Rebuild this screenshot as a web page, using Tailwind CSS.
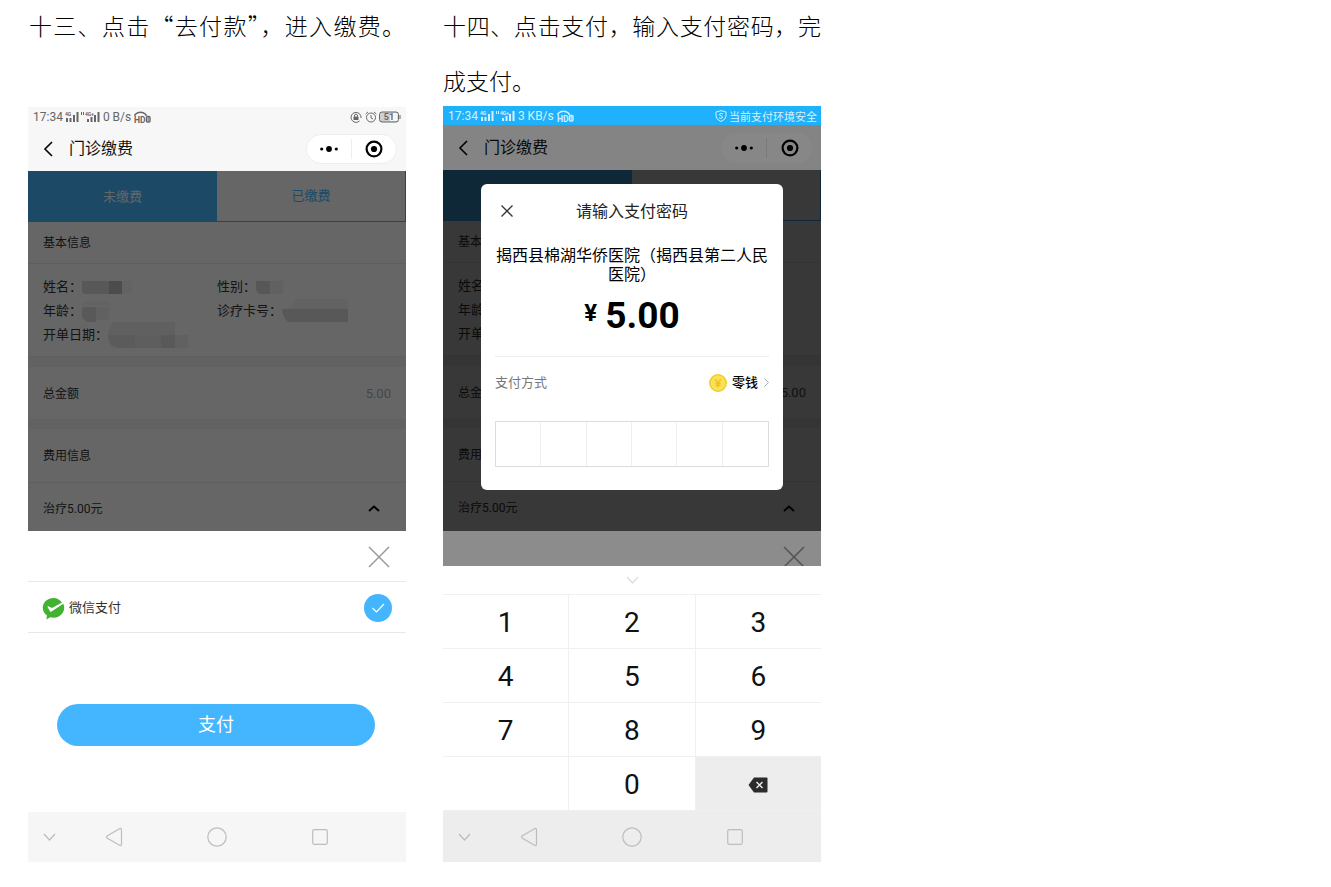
<!DOCTYPE html>
<html lang="zh-CN">
<head>
<meta charset="utf-8">
<meta name="viewport" content="width=device-width, initial-scale=1">
<title>门诊缴费指引</title>
<script src="https://cdn.jsdelivr.net/npm/@tailwindcss/browser@4"></script>
</head>
<body class="bg-white font-['Roboto','Noto_Sans_CJK_SC',sans-serif] text-[#333]">

<svg class="hidden" aria-hidden="true">
  <symbol id="signal" viewBox="0 0 35 12">
    <g fill="currentColor">
      <text x="0" y="5" font-size="5" font-weight="700">4G</text>
      <rect x="1" y="7" width="2" height="4"/><rect x="4.500" y="7" width="2" height="4"/><rect x="8" y="4" width="2" height="7"/><rect x="11.500" y="1" width="2" height="10"/>
      <rect x="16" y="1" width="1" height="3"/><rect x="18" y="1" width="1" height="3"/>
      <text x="20" y="5" font-size="5" font-weight="700">4G+</text>
      <rect x="22" y="8" width="2" height="3"/><rect x="25.500" y="6" width="2" height="5"/><rect x="29" y="4" width="2" height="7"/><rect x="32.500" y="1" width="2" height="10"/>
    </g>
  </symbol>
  <symbol id="hd" viewBox="0 0 17 12">
    <path d="M1 5V3.500Q6.500-1 12 3.500V5" fill="none" stroke="currentColor" stroke-width="1.500"/>
    <text x="0" y="11.500" font-size="8.500" font-weight="700" fill="currentColor">HD</text>
    <rect x="12.500" y="5.500" width="3.500" height="5.500" rx="1" fill="none" stroke="currentColor" stroke-width="1.400"/><path d="M14.200 6v4" stroke="currentColor"/>
  </symbol>
  <symbol id="back" viewBox="0 0 10 16"><path d="M9 1 2 8l7 7" fill="none" stroke="currentColor" stroke-width="1.600"/></symbol>
  <symbol id="dots" viewBox="0 0 18 8"><g fill="currentColor"><circle cx="1.700" cy="4" r="1.600"/><circle cx="9" cy="4" r="2.900"/><circle cx="16.300" cy="4" r="1.600"/></g></symbol>
  <symbol id="target" viewBox="0 0 18 18"><circle cx="9" cy="9" r="7.400" fill="none" stroke="currentColor" stroke-width="2.200"/><circle cx="9" cy="9" r="3.100" fill="currentColor"/></symbol>
  <symbol id="cross" viewBox="0 0 22 22"><path d="M1 1l20 20M21 1 1 21" fill="none" stroke="currentColor" stroke-width="1.500"/></symbol>
  <symbol id="caret" viewBox="0 0 12 7"><path d="M1 6l5-4.500L11 6" fill="none" stroke="currentColor" stroke-width="1.900"/></symbol>
  <symbol id="down" viewBox="0 0 13 8"><path d="M1 1l5.500 6L12 1" fill="none" stroke="currentColor" stroke-width="1.300"/></symbol>
  <symbol id="tri" viewBox="0 0 18 20"><path d="M15 1.500 2 9q-1 1 0 2l13 7.500q1.500.3 1.500-1.500V3q0-1.800-1.500-1.500z" fill="none" stroke="currentColor" stroke-width="1.200"/></symbol>
  <symbol id="circ" viewBox="0 0 20 20"><circle cx="10" cy="10" r="9.200" fill="none" stroke="currentColor" stroke-width="1.200"/></symbol>
  <symbol id="sq" viewBox="0 0 16 16"><rect x=".7" y=".7" width="14.600" height="14.600" rx="1.500" fill="none" stroke="currentColor" stroke-width="1.200"/></symbol>
  <symbol id="mask-name" viewBox="0 0 52 24"><path d="M0 6h27v13H3q-3 0-3-3z" fill="#dcdcdc"/><path d="M27 6h13v13H27z" fill="#bebebe"/><path d="M40 6h10v13H40z" fill="#f7f7f7"/></symbol>
  <symbol id="mask-age" viewBox="0 0 28 24"><path d="M3 2h25v5H0q0-4 3-5z" fill="#f8f8f8"/><path d="M0 8h14v15H6q-6-2-6-7z" fill="#dedede"/><path d="M14 8h13v13H14z" fill="#f3f3f3"/></symbol>
  <symbol id="mask-date" viewBox="0 0 80 26"><path d="M7 0h60v13H0Q1 2 7 0z" fill="#f0f0f0"/><path d="M0 13h27v13H10Q0 25 0 13z" fill="#e4e4e4"/><path d="M27 13h26v13H27z" fill="#eaeaea"/><path d="M53 13h14v13H53z" fill="#dedede"/><path d="M67 13h13v13H67z" fill="#f3f3f3"/></symbol>
  <symbol id="mask-sex" viewBox="0 0 28 24"><path d="M0 6h14v13H4q-4-1-4-6z" fill="#dadada"/><path d="M14 6h13v13H14z" fill="#f2f2f2"/></symbol>
  <symbol id="mask-card" viewBox="0 0 66 24"><path d="M13 0h53v10H0q12 0 13-10z" fill="#f5f5f5"/><path d="M0 10h66v13H8Q1 22 0 10z" fill="#dcdcdc"/></symbol>
</svg>

<main class="ml-7 grid w-full max-w-[793px] grid-cols-2 gap-[37px]">

  <section>
    <h2 class="-mt-[2px] h-[109px] px-px font-['Noto_Sans_CJK_SC',sans-serif] text-justify text-[23px] leading-[55px] font-light text-black [text-align-last:justify]">十三、点击“去付款”，进入缴费。</h2>

    <div class="flex flex-col">
      <div class="flex h-[19px] items-center bg-[#f7f7f7] pr-[5px] pl-[5px] text-xs text-[#666]">
        <span>17:34</span>
        <svg class="ml-[2px] h-3 w-[35px]"><use href="#signal"/></svg>
        <span class="ml-[3px]">0 B/s</span>
        <svg class="ml-[3px] h-3 w-[17px]"><use href="#hd"/></svg>
        <svg class="ml-auto size-3" viewBox="0 0 12 12"><path d="M9.500 10A5 5 0 1 1 11 7" fill="none" stroke="currentColor"/><rect x="3.500" y="5.500" width="5" height="3.500" fill="currentColor"/><path d="M4.500 5.500V4q1.500-2 3 0v1.500" fill="none" stroke="currentColor"/></svg>
        <svg class="ml-[3px] size-3" viewBox="0 0 12 12" fill="none" stroke="currentColor"><circle cx="6" cy="6.500" r="4.500"/><path d="M6 4v3l2 1M.7 3 3 .9M11.300 3 9 .9"/></svg>
        <svg class="ml-[2px] h-3 w-[22px]" viewBox="0 0 22 12"><rect x=".5" y="1" width="19" height="10" rx="2.500" fill="#d0d0d0" stroke="currentColor"/><path d="M11 2h6.500q1 0 1 1v6q0 1-1 1H11z" fill="#f7f7f7"/><path d="M21 4v4" stroke="currentColor"/><text x="10" y="9.200" font-size="9" font-weight="700" text-anchor="middle" fill="currentColor">51</text></svg>
      </div>

      <header class="flex h-[45px] items-center bg-[#f7f7f7] pt-px pr-[9px] pl-[15px] text-black">
        <button type="button" aria-label="返回"><svg class="h-4 w-[10px]"><use href="#back"/></svg></button>
        <h3 class="ml-4 text-base text-[#111]">门诊缴费</h3>
        <div class="ml-auto flex h-[30px] w-[91px] items-center rounded-full border border-[#eee] bg-white">
          <button type="button" aria-label="更多" class="flex flex-1 justify-center"><svg class="h-2 w-[18px]"><use href="#dots"/></svg></button>
          <span class="h-5 w-px bg-[#eee]"></span>
          <button type="button" aria-label="关闭小程序" class="flex flex-1 justify-center"><svg class="size-[18px]"><use href="#target"/></svg></button>
        </div>
      </header>

      <div class="relative bg-white">
        <div class="grid h-[51px] grid-cols-2 text-[13px]">
          <button type="button" class="bg-[#44b6ff] text-white">未缴费</button>
          <button type="button" class="border-r border-b border-[#44b6ff] text-[#44b6ff]">已缴费</button>
        </div>
        <h4 class="flex h-[42px] items-center border-b border-[#eee] px-[15px] text-xs">基本信息</h4>
        <div class="grid h-[92px] grid-cols-[174px_1fr] content-center px-[15px] pt-px text-[13px] leading-6">
          <div class="flex">姓名：<svg class="h-6 w-[52px]"><use href="#mask-name"/></svg></div>
          <div class="flex">性别：<svg class="h-6 w-[28px]"><use href="#mask-sex"/></svg></div>
          <div class="flex">年龄：<svg class="h-6 w-[28px]"><use href="#mask-age"/></svg></div>
          <div class="flex">诊疗卡号：<svg class="h-6 w-[66px]"><use href="#mask-card"/></svg></div>
          <div class="flex h-6 items-center">开单日期：<svg class="h-[26px] w-20"><use href="#mask-date"/></svg></div>
        </div>
        <div class="h-[11px] border-t border-[#eee] bg-[#f5f5f5]"></div>
        <div class="flex h-[52px] items-center justify-between px-[15px] pt-px text-xs"><span>总金额</span><span class="text-[13px] text-[#a8b4c0]">5.00</span></div>
        <div class="h-[10px] bg-[#f5f5f5]"></div>
        <h4 class="flex h-[54px] items-center border-b border-[#eee] px-[15px] text-xs">费用信息</h4>
        <div class="flex h-[48px] items-center justify-between pt-[3px] pr-[26px] pl-[15px] text-xs"><span>治疗5.00元</span><svg class="h-[7px] w-3 text-black"><use href="#caret"/></svg></div>
        <div class="absolute inset-0 bg-black/60"></div>
      </div>

      <div class="flex h-[51px] items-center justify-end border-b border-[#e8e8e8] pt-[2px] pr-4 text-[#999]">
        <button type="button" aria-label="关闭"><svg class="size-[22px]"><use href="#cross"/></svg></button>
      </div>
      <label class="flex h-[51px] items-center border-b border-[#e8e8e8] px-[14px] pt-[2px] text-[13px]">
        <svg class="h-[23px] w-[23px]" viewBox="0 0 23 23"><path d="M11.500 1C5.500 1 .8 5.300.8 10.800c0 3.300 1.600 6 4.200 7.800l-.7 4 4-2.300c1 .3 2.100.4 3.200.4 6 0 10.700-4.300 10.700-9.900 0-1.500-.3-2.800-.9-4L9.500 14.500c-.7.400-1.300.2-1.700-.4L5.600 10c-.3-.6.2-1 .8-.7l2.800 1.500c.4.200.9.200 1.300 0L20 5.600C18 2.800 15 1 11.500 1z" fill="#43b233"/></svg>
        <span class="ml-1">微信支付</span>
        <span class="ml-auto grid size-7 place-items-center">
          <input type="radio" name="pay" checked class="col-start-1 row-start-1 size-7 appearance-none rounded-full bg-[#44b6ff]">
          <svg class="z-10 col-start-1 row-start-1 h-[10px] w-[14px]" viewBox="0 0 14 10"><path d="M1.500 5 5.500 9 13 1" fill="none" stroke="#fff" stroke-width="1.200"/></svg>
        </span>
      </label>
      <button type="button" class="mt-[71px] mr-[31px] mb-[66px] ml-[29px] h-[42px] rounded-full bg-[#44b6ff] text-lg text-white">支付</button>

      <nav class="flex h-[50px] items-center bg-[#f6f6f6] pr-[35px] pl-2 text-[#bdbdbd]">
        <button type="button" aria-label="收起" class="flex w-[26px] justify-center"><svg class="h-2 w-[13px]"><use href="#down"/></svg></button>
        <button type="button" aria-label="后退" class="flex flex-1 justify-center"><svg class="h-5 w-[18px]"><use href="#tri"/></svg></button>
        <button type="button" aria-label="主页" class="flex flex-1 justify-center"><svg class="size-5"><use href="#circ"/></svg></button>
        <button type="button" aria-label="最近任务" class="flex flex-1 justify-center"><svg class="size-4"><use href="#sq"/></svg></button>
      </nav>
    </div>
  </section>

  <section>
    <h2 class="-mt-[2px] h-[108px] font-['Noto_Sans_CJK_SC',sans-serif] text-justify text-[23px] leading-[55px] font-light text-black">十四、点击支付，输入支付密码，完成支付。</h2>

    <div class="relative flex flex-col">
      <div class="flex h-[19px] items-center bg-[#1fb1fb] pr-1 pl-[5px] text-xs text-[#d5f1ff]">
        <span>17:34</span>
        <svg class="ml-[2px] h-3 w-[35px]"><use href="#signal"/></svg>
        <span class="ml-[3px]">3 KB/s</span>
        <svg class="ml-[3px] h-3 w-[17px]"><use href="#hd"/></svg>
        <svg class="ml-auto h-3 w-3" viewBox="0 0 12 12" fill="none" stroke="currentColor"><path d="M6 .7 11 2v4q0 3.500-5 5.500Q1 9.500 1 6V2z"/><path d="M7.800 4Q6 2.800 4.600 4 4 5.200 6 5.800T7.300 8Q6 9 4 7.800"/></svg>
        <span class="ml-[2px] pt-px font-['Noto_Sans_CJK_SC',sans-serif] text-[11px] leading-4">当前支付环境安全</span>
      </div>

      <div class="relative h-[441px] overflow-hidden bg-white">
        <header class="flex h-[45px] items-center bg-[#f0f0f0] pt-px pr-[9px] pl-[15px] text-black">
          <button type="button" aria-label="返回"><svg class="h-4 w-[10px]"><use href="#back"/></svg></button>
          <h3 class="ml-4 text-base text-[#111]">门诊缴费</h3>
          <div class="ml-auto flex h-[30px] w-[91px] items-center rounded-full bg-white/40">
            <button type="button" aria-label="更多" class="flex flex-1 justify-center"><svg class="h-2 w-[18px]"><use href="#dots"/></svg></button>
            <span class="h-5 w-px bg-[#ddd]"></span>
            <button type="button" aria-label="关闭小程序" class="flex flex-1 justify-center"><svg class="size-[18px]"><use href="#target"/></svg></button>
          </div>
        </header>
        <div class="relative bg-white">
          <div class="grid h-[51px] grid-cols-2 text-[13px]">
            <button type="button" class="bg-[#44b6ff]" aria-label="未缴费"></button>
            <button type="button" class="border-r border-b border-[#44b6ff]" aria-label="已缴费"></button>
          </div>
          <h4 class="flex h-[42px] items-center border-b border-[#eee] px-[15px] text-xs">基本信息</h4>
          <div class="grid h-[92px] content-center px-[15px] pt-px text-[13px] leading-6">
            <div>姓名：</div>
            <div>年龄：</div>
            <div>开单日期：</div>
          </div>
          <div class="h-[11px] border-t border-[#eee] bg-[#f5f5f5]"></div>
          <div class="flex h-[52px] items-center justify-between px-[15px] pt-px text-xs"><span>总金额</span><span class="text-[13px] text-[#555]">5.00</span></div>
          <div class="h-[10px] bg-[#f5f5f5]"></div>
          <h4 class="flex h-[54px] items-center border-b border-[#eee] px-[15px] text-xs">费用信息</h4>
          <div class="flex h-[49px] items-center justify-between pt-[3px] pr-[26px] pl-[15px] text-xs"><span>治疗5.00元</span><svg class="h-[7px] w-3 text-black"><use href="#caret"/></svg></div>
          <div class="absolute inset-0 bg-black/60"></div>
        </div>
        <div class="flex h-[52px] items-center justify-end pr-4 text-[#999]">
          <button type="button" aria-label="关闭"><svg class="size-[22px]"><use href="#cross"/></svg></button>
        </div>
        <div class="absolute inset-0 bg-black/45"></div>
      </div>

      <div role="dialog" aria-label="请输入支付密码" class="absolute inset-x-[38px] top-[78px] rounded-md bg-white px-[14px] pb-[23px] text-black">
        <div class="grid h-[54px] grid-cols-[24px_1fr_24px] items-center">
          <button type="button" aria-label="关闭" class="flex justify-center"><svg class="size-3 text-[#333]" viewBox="0 0 12 12"><path d="M.5.5l11 11M11.500.5l-11 11" stroke="currentColor" stroke-width="1.300"/></svg></button>
          <h3 class="pt-px text-center text-base text-[#222]">请输入支付密码</h3>
        </div>
        <p class="mt-2 text-center text-base leading-[19px]">揭西县棉湖华侨医院（揭西县第二人民医院）</p>
        <p class="mt-2 flex h-12 justify-center gap-2 font-bold"><span class="text-2xl leading-[42px]">¥</span><span class="text-[37px] leading-[48px]">5.00</span></p>
        <div class="mt-4 flex h-[51px] items-center border-t border-[#eee] pt-px text-[13px]">
          <span class="text-[#777]">支付方式</span>
          <button type="button" class="ml-auto flex items-center font-medium">
            <svg class="size-[18px]" viewBox="0 0 18 18"><circle cx="9" cy="9" r="8.200" fill="#fbe05a" stroke="#f2cd22" stroke-width="1.500"/><path d="M6 5l3 4 3-4M9 9v4.500M6.500 9.500h5M6.500 11.500h5" fill="none" stroke="#f0c419" stroke-width="1.400"/></svg>
            <span class="ml-[5px]">零钱</span>
            <svg class="ml-[6px] h-[9px] w-[5px]" viewBox="0 0 5 9"><path d="M.5.500l4 4-4 4" fill="none" stroke="#aaa"/></svg>
          </button>
        </div>
        <div class="mt-[14px] grid h-[46px] grid-cols-6 divide-x divide-[#eee] border border-[#dcdce0]">
          <input type="password" maxlength="1" aria-label="密码第1位" class="min-w-0 text-center">
          <input type="password" maxlength="1" aria-label="密码第2位" class="min-w-0 text-center">
          <input type="password" maxlength="1" aria-label="密码第3位" class="min-w-0 text-center">
          <input type="password" maxlength="1" aria-label="密码第4位" class="min-w-0 text-center">
          <input type="password" maxlength="1" aria-label="密码第5位" class="min-w-0 text-center">
          <input type="password" maxlength="1" aria-label="密码第6位" class="min-w-0 text-center">
        </div>
      </div>

      <button type="button" aria-label="收起键盘" class="flex h-[28px] items-center justify-center text-[#ddd]"><svg class="h-2 w-[13px]"><use href="#down"/></svg></button>
      <div class="grid auto-rows-[53px] grid-cols-3 gap-px border-y border-[#f0f0f0] bg-[#f0f0f0] text-[28px] text-[#111] *:bg-white *:pt-[2px]">
        <button type="button">1</button><button type="button">2</button><button type="button">3</button>
        <button type="button">4</button><button type="button">5</button><button type="button">6</button>
        <button type="button">7</button><button type="button">8</button><button type="button">9</button>
        <span></span><button type="button">0</button>
        <button type="button" aria-label="删除" class="flex items-center justify-center bg-[#ededed]!"><svg class="h-4 w-5" viewBox="0 0 20 16"><path d="M6 .5h12.500q1 0 1 1v13q0 1-1 1H6L.5 8z" fill="#2b2b2b"/><path d="M8.500 5l6 6M14.500 5l-6 6" stroke="#eee" stroke-width="1.400"/></svg></button>
      </div>

      <nav class="flex h-[51px] items-center bg-[#ededed] pr-[35px] pl-2 text-[#bdbdbd]">
        <button type="button" aria-label="收起" class="flex w-[26px] justify-center"><svg class="h-2 w-[13px]"><use href="#down"/></svg></button>
        <button type="button" aria-label="后退" class="flex flex-1 justify-center"><svg class="h-5 w-[18px]"><use href="#tri"/></svg></button>
        <button type="button" aria-label="主页" class="flex flex-1 justify-center"><svg class="size-5"><use href="#circ"/></svg></button>
        <button type="button" aria-label="最近任务" class="flex flex-1 justify-center"><svg class="size-4"><use href="#sq"/></svg></button>
      </nav>
    </div>
  </section>
</main>
</body>
</html>
